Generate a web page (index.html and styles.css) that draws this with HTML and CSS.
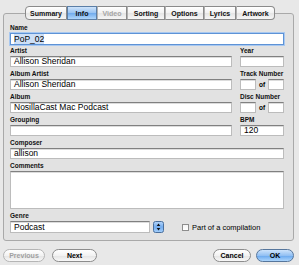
FILE: index.html
```html
<!DOCTYPE html>
<html>
<head>
<meta charset="utf-8">
<link rel="stylesheet" href="styles.css">
</head>
<body>
<div class="tabs">
  <span class="tab first w42">Summary</span>
  <span class="tab sel w30">Info</span>
  <span class="tab dis w30">Video</span>
  <span class="tab w38">Sorting</span>
  <span class="tab w39">Options</span>
  <span class="tab w32">Lyrics</span>
  <span class="tab last w39">Artwork</span>
</div>
<div class="panel">
  <div class="field">
    <span class="lbl">Name</span>
    <div class="inp focus"><span class="selected">PoP_02</span></div>
  </div>
  <div class="row">
    <div class="field"><span class="lbl">Artist</span><div class="inp">Allison Sheridan</div></div>
    <div class="field"><span class="lbl">Year</span><div class="inp"></div></div>
  </div>
  <div class="row">
    <div class="field"><span class="lbl">Album Artist</span><div class="inp">Allison Sheridan</div></div>
    <div class="field"><span class="lbl">Track Number</span>
      <div class="pair"><div class="inp small"></div><span class="of">of</span><div class="inp small"></div></div>
    </div>
  </div>
  <div class="row">
    <div class="field"><span class="lbl">Album</span><div class="inp">NosillaCast Mac Podcast</div></div>
    <div class="field"><span class="lbl">Disc Number</span>
      <div class="pair"><div class="inp small"></div><span class="of">of</span><div class="inp small"></div></div>
    </div>
  </div>
  <div class="row">
    <div class="field"><span class="lbl">Grouping</span><div class="inp"></div></div>
    <div class="field"><span class="lbl">BPM</span><div class="inp">120</div></div>
  </div>
  <div class="field"><span class="lbl">Composer</span><div class="inp">allison</div></div>
  <div class="field"><span class="lbl">Comments</span><div class="inp area"></div></div>
  <div class="field"><span class="lbl">Genre</span>
    <div class="genre">
      <div class="inp combo">Podcast</div>
      <span class="stepper">
        <svg width="11" height="12" viewBox="0 0 11 12">
          <defs><linearGradient id="g" x1="0" y1="0" x2="0" y2="1"><stop offset="0" stop-color="#b7d7fb"/><stop offset="0.5" stop-color="#72acef"/><stop offset="1" stop-color="#a6d0fb"/></linearGradient></defs>
          <rect x="0.5" y="0.5" width="10" height="11" rx="2" fill="url(#g)" stroke="#4a6f9c"/>
          <path d="M5.5 2.6 L7.3 4.9 L3.7 4.9 Z" fill="#111"/>
          <path d="M5.5 9.4 L7.3 7.1 L3.7 7.1 Z" fill="#111"/>
        </svg>
      </span>
      <span class="check"></span>
      <span class="checklbl">Part of a compilation</span>
    </div>
  </div>
</div>
<div class="buttons">
  <span class="btn dis w42">Previous</span>
  <span class="btn w45 gap7">Next</span>
  <span class="spacer"></span>
  <span class="btn w38">Cancel</span>
  <span class="btn def w38 gap5">OK</span>
</div>
</body>
</html>
```
FILE: styles.css
```css
* { box-sizing: border-box; }
html, body { margin: 0; padding: 0; }
body {
  width: 299px;
  height: 265px;
  overflow: hidden;
  background: #e8e8e8;
  font-family: "Liberation Sans", Arial, sans-serif;
  color: #000;
}
.tabs {
  display: flex;
  margin: 6px 0 0 25px;
  height: 14px;
  position: relative;
  z-index: 1;
}
.tab {
  height: 14px;
  display: flex;
  align-items: center;
  justify-content: center;
  font-size: 7px;
  font-weight: bold;
  color: #111;
  border: 1px solid #8a8a8a;
  border-left: 1px solid #b0b0b0;
  background: linear-gradient(#ffffff, #f1f1f1 50%, #e4e4e4 50%, #f6f6f6);
}
.tab.first { border-left: 1px solid #8a8a8a; border-radius: 4px 0 0 4px; }
.tab.last { border-radius: 0 4px 4px 0; }
.tab.sel {
  background: linear-gradient(#cfe4fb, #97c2f2 50%, #6ea9ec 50%, #b0d6fb);
  border-color: #5b7ea6;
}
.tab.dis { color: #a5a5a5; }
.w30 { width: 30px; }
.w32 { width: 32px; }
.w38 { width: 38px; }
.w39 { width: 39px; }
.w42 { width: 42px; }
.w45 { width: 45px; }

.panel {
  margin: -7px 0 0 3px;
  width: 291px;
  height: 228px;
  border: 1px solid #a9a9a9;
  border-radius: 3px;
  background: #e2e2e2;
  padding: 10px 9px 0 6px;
}
.row {
  display: grid;
  grid-template-columns: 222px 44px;
  column-gap: 8px;
}
.lbl {
  display: block;
  height: 9px;
  font-size: 6.5px;
  line-height: 8px;
  font-weight: bold;
  color: #111;
}
.inp {
  height: 11px;
  margin-bottom: 3px;
  background: #fff;
  border: 1px solid #bcbcbc;
  border-top-color: #808080;
  box-shadow: inset 0 1px 0 #dcdcdc;
  font-size: 8.5px;
  line-height: 9px;
  padding: 0 3px;
  white-space: nowrap;
  overflow: hidden;
}
.inp.focus {
  height: 12px;
  margin-bottom: 2px;
  border: 1px solid #5e93d6;
  box-shadow: 0 0 0 1px #a8c8f0;
  line-height: 10px;
}
.selected { background: #cddff6; }
.pair { display: flex; }
.inp.small { width: 16px; }
.of {
  width: 12px;
  text-align: center;
  font-size: 6.5px;
  font-weight: bold;
  line-height: 11px;
}
.inp.area { height: 38px; }
.genre {
  display: flex;
  align-items: center;
  height: 12px;
}
.inp.combo {
  width: 140px;
  height: 12px;
  margin: 0;
  line-height: 10px;
}
.stepper { display: block; width: 11px; height: 12px; margin-left: 3px; }
.stepper svg { display: block; }
.check {
  width: 7px;
  height: 7px;
  margin-left: 18px;
  background: linear-gradient(#f4f4f4, #ffffff);
  border: 1px solid #8d8d8d;
}
.checklbl {
  margin-left: 3px;
  font-size: 7.5px;
  line-height: 9px;
}
.buttons {
  display: flex;
  margin: 8px 0 0 3px;
  width: 291px;
  height: 13px;
}
.spacer { flex: 1; }
.btn {
  height: 13px;
  border: 1px solid #8c8c8c;
  border-radius: 7px;
  background: linear-gradient(#ffffff, #f2f2f2 50%, #e3e3e3 50%, #f8f8f8);
  font-size: 7px;
  font-weight: bold;
  display: flex;
  align-items: center;
  justify-content: center;
}
.btn.dis { color: #a0a0a0; border-color: #b5b5b5; }
.btn.def {
  background: linear-gradient(#cde3fb, #93c0f3 50%, #66a6ee 50%, #acd5fc);
  border-color: #56769c;
}
.gap7 { margin-left: 7px; }
.gap5 { margin-left: 5px; }
```
